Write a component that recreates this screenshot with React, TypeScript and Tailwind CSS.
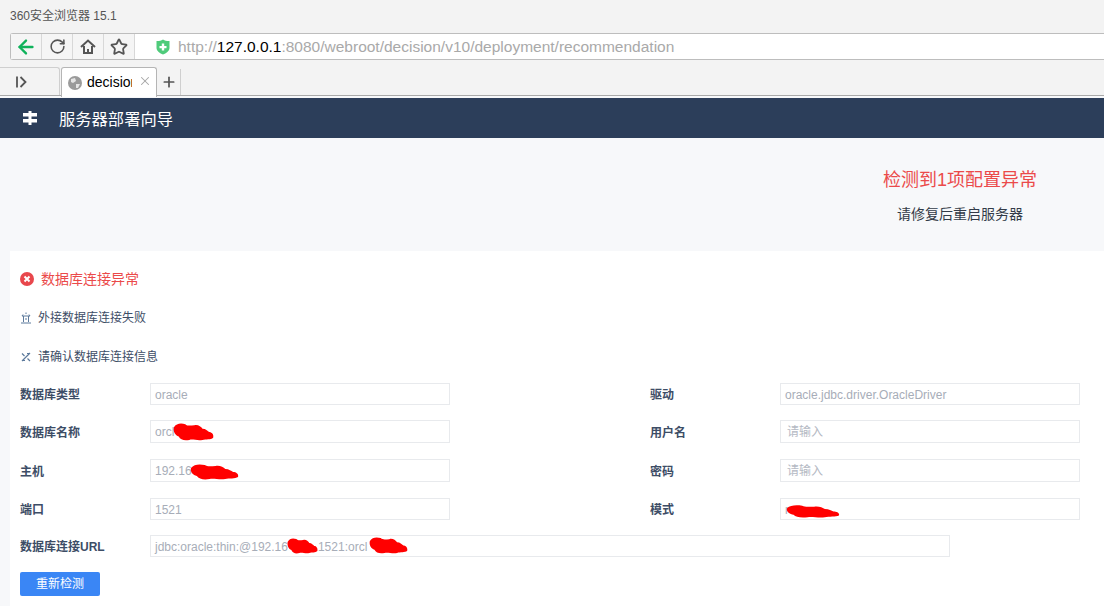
import React from 'react';
import { ArrowLeft, RotateCw, Star, X, Plus } from 'lucide-react';

const cjk = "font-['Liberation_Sans','Noto_Sans_CJK_SC',sans-serif]";

// red marker strokes painted over the secret parts of the screenshot
const Scribble = ({ className }: { className: string }) => (
  <svg className={`absolute ${className}`} viewBox="0 0 50 16" preserveAspectRatio="none">
    <path
      d="M1 4 C4 0 10 0 15 1 C18 3 22 2 26 2 C30 1 34 3 36 5 C40 5 42 7 44 8 C47 8 50 10 49 13 C46 15 40 14 36 15 C30 16 24 14 20 15 C14 16 9 15 7 12 C3 11 0 8 1 4 Z"
      fill="#ff0000"
    />
  </svg>
);

const Field = ({
  label,
  value,
  placeholder,
  height = 'h-[22px]',
  className = '',
  scribble,
}: {
  label: string;
  value?: string;
  placeholder?: string;
  height?: string;
  className?: string;
  scribble?: string;
}) => (
  <div className={`flex items-center ${className}`}>
    <div className="w-[130px] pt-[2px] text-[12px] font-bold text-[#3d4d66]">{label}</div>
    <div
      className={`relative flex w-[300px] items-center border border-[#e8eaed] bg-white px-[4px] pt-[1px] text-[12px] text-[#a7adb8] ${height}`}
    >
      {placeholder ? <span className="pl-[2px] text-[#b4b9c3]">{placeholder}</span> : value}
      {scribble && <Scribble className={scribble} />}
    </div>
  </div>
);

export default function App() {
  return (
    <div className={`flex h-[606px] w-[1104px] flex-col overflow-hidden bg-[#f7f8fa] ${cjk}`}>
      {/* Browser chrome */}
      <div className="h-[33px] bg-[#f3f3f3] pl-[10px] pt-[8px] text-[12px] leading-[16px] text-[#555555]">
        360安全浏览器 15.1
      </div>
      <div className="h-[27px] bg-[#f3f3f3] pl-[10px]">
        <div className="flex h-[27px] items-stretch rounded-l-[3px] border border-r-0 border-[#bdbdbd] bg-white">
          <div className="flex w-[31px] items-center justify-center border-r border-[#d8d8d8] bg-[#f5f5f5]">
            <ArrowLeft className="h-[22px] w-[22px] text-[#0fb25b]" strokeWidth={2.6} />
          </div>
          <div className="flex w-[31px] items-center justify-center border-r border-[#d8d8d8] bg-[#f5f5f5]">
            <RotateCw className="h-[17px] w-[17px] text-[#555555]" strokeWidth={2.2} />
          </div>
          <div className="flex w-[31px] items-center justify-center border-r border-[#d8d8d8] bg-[#f5f5f5]">
            <svg width="16" height="15" viewBox="0 0 16 15" fill="none" stroke="#555555" strokeWidth="2">
              <path d="M1 8 L8 1.5 L15 8" />
              <path d="M4 7 V14 H12 V7" />
              <path d="M7 10 H9 V14 H7 Z" fill="#555555" stroke="none" />
            </svg>
          </div>
          <div className="flex w-[31px] items-center justify-center border-r border-[#d8d8d8] bg-[#f5f5f5]">
            <Star className="h-[18px] w-[18px] text-[#555555]" strokeWidth={2.4} />
          </div>
          <div className="ml-[21px] flex items-center">
            <svg width="14" height="16" viewBox="0 0 14 16">
              <path d="M0.5 2 C4 2 5 1.5 7 0.5 C9 1.5 10 2 13.5 2 V9 C13.5 12 10 14.5 7 15.5 C4 14.5 0.5 12 0.5 9 Z" fill="#4fcb7b" />
              <path d="M5.8 4.5 H8.2 V7 H10.5 V9.2 H8.2 V11.5 H5.8 V9.2 H3.5 V7 H5.8 Z" fill="#ffffff" />
            </svg>
            <div className="ml-[8px] text-[15.5px] text-[#a9a9a9]">
              http://<span className="text-black">127.0.0.1</span>:8080/webroot/decision/v10/deployment/recommendation
            </div>
          </div>
        </div>
      </div>

      {/* Tab strip */}
      <div className="flex h-[36px] items-end border-b border-[#a9a9a9] bg-[#f3f3f3]">
        <div className="flex h-[28px] w-[60px] items-center rounded-tr-[3px] border-r border-t border-[#cfcfcf] pl-[15px]">
          <svg width="12" height="14" viewBox="0 0 12 14">
            <path d="M2 1.5 V12.5" stroke="#555555" strokeWidth="1.8" />
            <path d="M5.5 2 L10.5 7 L5.5 12" stroke="#555555" strokeWidth="1.8" fill="none" />
          </svg>
        </div>
        <div className="-mb-[2px] ml-[1px] flex h-[30px] w-[96px] items-center rounded-t-[3px] border border-b-0 border-[#b5b5b5] bg-white pl-[6px]">
          <svg width="14" height="14" viewBox="0 0 14 14">
            <circle cx="7" cy="7" r="7" fill="#9b9b9b" />
            <path d="M3 3 L7 2 L8 5 L5 7 L3 6 Z M8 8 L12 8 L10 12 L8 12 Z" fill="#e6e6e6" />
          </svg>
          <span className="ml-[5px] w-[45px] overflow-hidden whitespace-nowrap text-[14px] text-black">decision</span>
          <X className="-mt-[3px] ml-[6px] h-[14px] w-[14px] text-[#a5a5a5]" strokeWidth={1.8} />
        </div>
        <div className="flex h-[26px] w-[24px] items-center justify-center border-r border-[#cfcfcf]">
          <Plus className="h-[16px] w-[16px] text-[#555555]" strokeWidth={2.6} />
        </div>
      </div>

      {/* App header */}
      <div className="mt-[2px] flex h-[40px] items-center bg-[#2c3e5a] pl-[22px] text-white">
        <svg width="16" height="16" viewBox="0 0 16 16">
          <path d="M1 3 H15 V6.5 H1 Z M1 9 H15 V12.5 H1 Z M6.5 1 H9.5 V15 H6.5 Z" fill="#ffffff" />
        </svg>
        <div className="ml-[21px] pt-[2px] text-[16.3px]">服务器部署向导</div>
      </div>

      {/* Result banner */}
      <div className="flex h-[113px] flex-col items-center pl-[816px]">
        <div className="mt-[30px] text-[18px] leading-[24px] text-[#eb4a4a]">检测到1项配置异常</div>
        <div className="mt-[12px] text-[14px] leading-[20px] text-[#333b48]">请修复后重启服务器</div>
      </div>

      {/* Detail panel */}
      <div className="ml-[10px] flex-1 bg-white pl-[10px]">
        <div className="flex items-center pt-[20px]">
          <svg width="14" height="14" viewBox="0 0 14 14">
            <circle cx="7" cy="7" r="7" fill="#e8474c" />
            <path d="M4.5 4.5 L9.5 9.5 M9.5 4.5 L4.5 9.5" stroke="#ffffff" strokeWidth="2" />
          </svg>
          <span className="ml-[7px] text-[14px] leading-[16px] text-[#eb4a4a]">数据库连接异常</span>
        </div>
        <div className="mt-[23px] flex items-center text-[12px] leading-[16px] text-[#3d4d66]">
          <svg width="12" height="12" viewBox="0 0 12 12" fill="none" stroke="#5d7a9c" strokeWidth="1">
            <path d="M6 0.5 V2 M2 4 H10 M3 2.5 L2 4 M9 2.5 L10 4 M3.5 4 V10 M8.5 4 V10 M5 7 H7 M1 11 H11" />
          </svg>
          <span className="ml-[6px]">外接数据库连接失败</span>
        </div>
        <div className="mt-[23px] flex items-center text-[12px] leading-[16px] text-[#3d4d66]">
          <svg width="12" height="12" viewBox="0 0 12 12" fill="none" stroke="#5d7a9c" strokeWidth="1.2">
            <path d="M2 10 L10 2 M2 2.5 L4.5 5 M7.5 7.5 L10 10 M7 2.5 H9.5 M2.5 9.5 H5" />
          </svg>
          <span className="ml-[6px]">请确认数据库连接信息</span>
        </div>

        {/* Connection form */}
        <div className="mt-[18px] grid w-[1060px] grid-cols-[630px_430px] gap-y-[16px]">
          <Field label="数据库类型" value="oracle" />
          <Field label="驱动" value="oracle.jdbc.driver.OracleDriver" />
          <Field
            label="数据库名称"
            value="orcl"
            height="h-[23px]"
            className="-mt-[1px]"
            scribble="left-[22px] top-[2px] h-[18px] w-[41px]"
          />
          <Field label="用户名" placeholder="请输入" height="h-[23px]" className="-mt-[1px]" />
          <Field
            label="主机"
            value="192.16"
            height="h-[23px]"
            scribble="left-[39px] top-[4px] h-[16px] w-[49px]"
          />
          <Field label="密码" placeholder="请输入" height="h-[23px]" />
          <Field label="端口" value="1521" />
          <Field label="模式" value="r" scribble="left-[5px] top-[6px] h-[13px] w-[54px]" />
        </div>
        <div className="mt-[15px] flex items-center">
          <div className="w-[130px] pt-[2px] text-[12px] font-bold text-[#3d4d66]">数据库连接URL</div>
          <div className="relative flex h-[22px] w-[800px] items-center border border-[#e8eaed] px-[4px] pt-[1px] text-[12px] text-[#a7adb8]">
            jdbc:oracle:thin:@192.16
            <span className="ml-[30px]">1521:orcl</span>
            <Scribble className="left-[136px] top-[2px] h-[16px] w-[31px]" />
            <Scribble className="left-[218px] top-[1px] h-[17px] w-[39px]" />
          </div>
        </div>
        <button className="mt-[15px] h-[24px] w-[80px] rounded-[2px] bg-[#3a86f5] text-[12px] text-white">重新检测</button>
      </div>
    </div>
  );
}
